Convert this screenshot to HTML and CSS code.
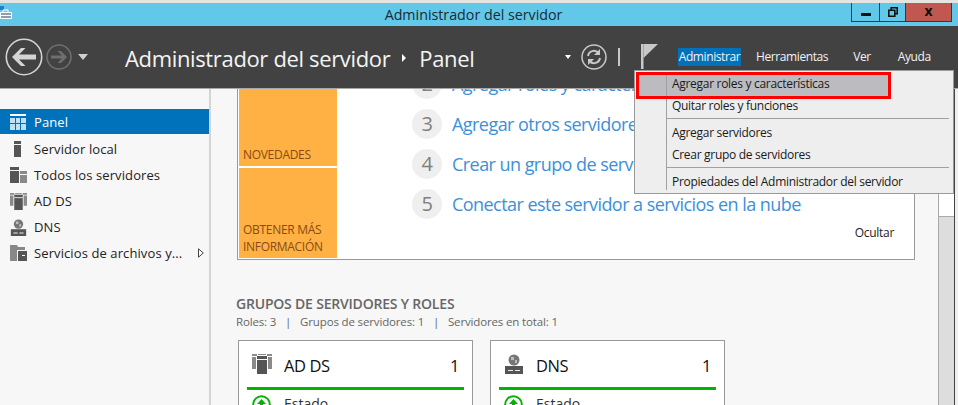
FILE: index.html
```html
<!DOCTYPE html>
<html lang="es">
<head>
  <meta charset="UTF-8" />
  <title>Administrador del servidor</title>
  <link rel="stylesheet" href="styles.css">
</head>
<body>
  <svg class="defs" width="0" height="0">
    <symbol id="ic-adds" viewBox="0 0 20 20">
      <path fill="#8a8a8a" d="M0 0h5v2H0zM15 0h5v2h-5zM0 3h4v12H0zM16 3h4v12h-4z"/>
      <path fill="#8a8a8a" d="M6 0h8v1H6z"/>
      <path fill="#555" d="M5 2h10v18H5z"/>
      <path fill="#f7f7f7" d="M5 5h10v1H5z"/>
    </symbol>
    <symbol id="ic-dns" viewBox="0 0 20 20">
      <circle cx="10" cy="6" r="5.5" fill="#777"/>
      <path fill="#bbb" d="M7 3h3v3H7zM11 6h2v3h-2z"/>
      <path fill="#555" d="M1 12h18v8H1z"/>
      <path fill="#eee" d="M4 16h5v1H4zM11 16h5v1h-5z"/>
    </symbol>
  </svg>

  <div class="topline"></div>

  <header class="titlebar">
    <svg class="app-icon" width="13" height="15" viewBox="0 0 13 15">
      <path fill="#1f7fc8" d="M0 0h4v4H0z"/>
      <path fill="#8aa0b0" stroke="#fff" d="M.5 6.5h11v6H.5z"/>
      <path fill="none" stroke="#fff" d="M3 6V4h5v2M.5 9.5h11"/>
    </svg>
    <span class="title-text">Administrador del servidor</span>
    <div class="winbtns">
      <div class="winbtn"><span class="min-glyph"></span></div>
      <div class="winbtn">
        <svg width="10" height="10" viewBox="0 0 10 10"><path fill="none" stroke="#111" stroke-width="1.6" d="M.8 3.2h6v6h-6zM3.2 3V.8h6v6H7"/></svg>
      </div>
      <div class="winbtn close">x</div>
    </div>
  </header>

  <nav class="navbar">
    <svg class="nav-back" width="38" height="38" viewBox="0 0 38 38">
      <circle cx="19" cy="19" r="17.7" fill="none" stroke="#d4d4d4" stroke-width="1.6"/>
      <path fill="#d4d4d4" d="M7 19l9-9h4.5l-6.5 6.500h17v5H14l6.500 6.500H16z"/>
    </svg>
    <svg class="nav-fwd" width="26" height="26" viewBox="0 0 26 26">
      <circle cx="13" cy="13" r="12" fill="none" stroke="#6f6f6f" stroke-width="1.6"/>
      <path fill="#6f6f6f" d="M21 13l-6-6h-3.500l4.500 4.500H5v3h11l-4.500 4.500H15z"/>
    </svg>
    <span class="nav-caret"></span>
    <div class="crumbs">
      <span>Administrador del servidor</span>
      <span class="crumb-sep"></span>
      <span>Panel</span>
    </div>
    <span class="nav-caret small"></span>
    <svg class="nav-refresh" width="26" height="26" viewBox="0 0 26 26">
      <circle cx="13" cy="13" r="12" fill="none" stroke="#c8c8c8" stroke-width="1.500"/>
      <path fill="none" stroke="#c8c8c8" stroke-width="2" d="M7 12a6 6 0 0 1 10.500-3M19 14a6 6 0 0 1-10.500 3"/>
      <path fill="#c8c8c8" d="M19 5v6h-6zM7 21v-6h6z"/>
    </svg>
    <span class="nav-bar"></span>
    <svg class="nav-flag" width="18" height="26" viewBox="0 0 18 26">
      <path fill="#c8c8c8" d="M1 1h2.500v25H1z"/>
      <path fill="#c8c8c8" d="M3.500 1H18L3.500 15z"/>
    </svg>
    <div class="navmenu">
      <span class="active">Administrar</span>
      <span>Herramientas</span>
      <span class="ver">Ver</span>
      <span>Ayuda</span>
    </div>
  </nav>

  <div class="main">
    <aside class="sidebar">
      <div class="side-row selected">
        <svg class="side-icon" width="17" height="16" viewBox="0 0 17 16">
          <path fill="#fff" d="M0 0h16v2H0z"/>
          <path fill="#bfe0f5" d="M0 4h5v5H0zM6 4h4v5H6zM11 4h5v5h-5zM0 10h5v6H0zM6 10h4v6H6zM11 10h5v6h-5z"/>
        </svg>
        <span>Panel</span>
      </div>
      <div class="side-row">
        <svg class="side-icon" width="17" height="16" viewBox="0 0 17 16">
          <path fill="#555" d="M4 0h7v16H4z"/><path fill="#f7f7f7" d="M4 3h7v1H4z"/>
        </svg>
        <span>Servidor local</span>
      </div>
      <div class="side-row">
        <svg class="side-icon" width="17" height="16" viewBox="0 0 17 16">
          <path fill="#555" d="M0 0h9v16H0z"/><path fill="#888" d="M10 4h7v12h-7z"/>
          <path fill="#f7f7f7" d="M0 3h9v1H0zM10 7h7v1h-7z"/>
        </svg>
        <span>Todos los servidores</span>
      </div>
      <div class="side-row">
        <svg class="side-icon" width="17" height="17"><use href="#ic-adds"/></svg>
        <span>AD DS</span>
      </div>
      <div class="side-row">
        <svg class="side-icon" width="17" height="17"><use href="#ic-dns"/></svg>
        <span>DNS</span>
      </div>
      <div class="side-row">
        <svg class="side-icon" width="17" height="16" viewBox="0 0 17 16">
          <path fill="#888" d="M0 0h7l1 2h7v3H7v11H0z"/><path fill="#555" d="M8 6h9v10H8z"/>
          <path fill="#f7f7f7" d="M12 10h3v1h-3z"/>
        </svg>
        <span class="side-long">Servicios de archivos y...</span>
        <svg width="6" height="10" viewBox="0 0 6 10"><path fill="#fff" stroke="#444" d="M.5.8v8.400L5.300 5z"/></svg>
      </div>
    </aside>

    <section class="content">
      <div class="welcome">
        <div class="tiles">
          <div class="tile news">NOVEDADES</div>
          <div class="tile learn">OBTENER MÁS INFORMACIÓN</div>
        </div>
        <div class="steps">
          <div class="step"><span class="num">2</span><a>Agregar roles y características</a></div>
          <div class="step"><span class="num">3</span><a>Agregar otros servidores para administrar</a></div>
          <div class="step"><span class="num">4</span><a>Crear un grupo de servidores</a></div>
          <div class="step"><span class="num">5</span><a>Conectar este servidor a servicios en la nube</a></div>
          <div class="hide-link">Ocultar</div>
        </div>
      </div>

      <h3 class="groups-title">GRUPOS DE SERVIDORES Y ROLES</h3>
      <p class="groups-sub">Roles: 3 <i>|</i> Grupos de servidores: 1 <i>|</i> Servidores en total: 1</p>

      <div class="cards">
        <div class="card">
          <div class="card-head">
            <svg width="20" height="20"><use href="#ic-adds"/></svg>
            <span class="card-name">AD DS</span>
            <span class="card-count">1</span>
          </div>
          <div class="card-rule"></div>
          <div class="card-row">
            <svg width="19" height="19" viewBox="0 0 19 19"><circle cx="9.500" cy="9.500" r="8.300" fill="none" stroke="#00b400" stroke-width="2"/><path fill="#00b400" d="M9.500 4l4.500 5h-3v5H8V9H5z"/></svg>
            <span>Estado</span>
          </div>
        </div>
        <div class="card">
          <div class="card-head">
            <svg width="20" height="20"><use href="#ic-dns"/></svg>
            <span class="card-name">DNS</span>
            <span class="card-count">1</span>
          </div>
          <div class="card-rule"></div>
          <div class="card-row">
            <svg width="19" height="19" viewBox="0 0 19 19"><circle cx="9.500" cy="9.500" r="8.300" fill="none" stroke="#00b400" stroke-width="2"/><path fill="#00b400" d="M9.500 4l4.500 5h-3v5H8V9H5z"/></svg>
            <span>Estado</span>
          </div>
        </div>
      </div>
    </section>

    <div class="scrollbar"><div class="thumb"></div></div>
    <div class="frame-edge"></div>
  </div>

  <div class="dropdown">
    <div class="dd-item hi">Agregar roles y características</div>
    <div class="dd-item">Quitar roles y funciones</div>
    <div class="dd-sep"></div>
    <div class="dd-item">Agregar servidores</div>
    <div class="dd-item">Crear grupo de servidores</div>
    <div class="dd-sep"></div>
    <div class="dd-item">Propiedades del Administrador del servidor</div>
    <div class="dd-redbox"></div>
  </div>
</body>
</html>
```

FILE: styles.css
```css
* {
  box-sizing: border-box;
}

html, body {
  height: 100%;
}

html {
  overflow: hidden;
}

body {
  margin: 0;
  width: 958px;
  height: 405px;
  overflow: hidden;
  position: relative;
  display: flex;
  flex-direction: column;
  background: #efefef;
  font-family: "Open Sans", "Noto Sans", sans-serif;
  font-size: 12px;
  color: #1a1a1a;
}

.defs {
  position: absolute;
}

.topline {
  height: 3px;
  background: #e4e4e0;
  flex: none;
}

/* title bar */
.titlebar {
  height: 23px;
  flex: none;
  background: #62c8ea;
  display: flex;
  align-items: center;
  justify-content: center;
  position: relative;
  padding-right: 11px;
  color: #1a2a33;
  font-size: 14.25px;
}

.app-icon {
  position: absolute;
  left: 0;
  top: 3px;
}

.winbtns {
  position: absolute;
  left: 851px;
  top: 0;
  width: 101px;
  height: 19px;
  display: flex;
  border: 1px solid #2a3c46;
  border-top: none;
}

.winbtn {
  width: 28px;
  display: flex;
  align-items: center;
  justify-content: center;
  border-right: 1px solid #2a3c46;
}

.winbtn + .winbtn {
  width: 26px;
}

.winbtn.close {
  flex: 1;
  border-right: none;
  background: #c0584f;
  color: #111;
  font-weight: 700;
  font-size: 14px;
  line-height: 14px;
  padding-bottom: 3px;
}

.min-glyph {
  width: 10px;
  height: 3px;
  background: #111;
  margin-top: 4px;
}

/* nav bar */
.navbar {
  height: 63px;
  flex: none;
  background: #424242;
  border-bottom: 1px solid #a8a8a8;
  display: flex;
  align-items: center;
  padding-left: 5px;
  color: #fff;
}

.nav-fwd {
  margin-left: 3px;
}

.nav-caret {
  width: 0;
  height: 0;
  margin-left: 6px;
  border-left: 5px solid transparent;
  border-right: 5px solid transparent;
  border-top: 6px solid #d0d0d0;
}

.nav-caret.small {
  margin-left: 0;
  border-left-width: 3.500px;
  border-right-width: 3.500px;
  border-top-width: 4px;
  border-top-color: #fff;
}

.crumbs {
  margin-left: 37px;
  width: 440px;
  display: flex;
  align-items: center;
  font-size: 22px;
  letter-spacing: -0.35px;
  color: #f4f4f4;
  padding-top: 2px;
}

.crumb-sep {
  width: 0;
  height: 0;
  margin: 0 13px 0 12px;
  border-top: 4px solid transparent;
  border-bottom: 4px solid transparent;
  border-left: 4px solid #fff;
}

.nav-refresh {
  margin-left: 10px;
}

.nav-bar {
  width: 2px;
  height: 18px;
  margin-left: 11px;
  background: #c8c8c8;
}

.nav-flag {
  margin-left: 20px;
  margin-top: -2px;
}

.navmenu {
  display: flex;
  align-items: center;
  margin-left: 20px;
  font-size: 12px;
  letter-spacing: -0.4px;
}

.navmenu span {
  margin-right: 25px;
  line-height: 18px;
  color: #f2f2f2;
}

.navmenu .active {
  background: #0072bc;
  margin-right: 15px;
  width: 63px;
  text-align: center;
}

.navmenu .ver {
  margin-right: 27px;
}

/* sidebar + content */
.main {
  flex: 1;
  display: flex;
  min-height: 0;
  overflow: hidden;
}

.sidebar {
  width: 211px;
  flex: none;
  padding-top: 20px;
  background: #f7f7f7;
  border-right: 2px solid #d4d4d4;
  font-size: 13px;
  letter-spacing: 0.1px;
  color: #222;
}

.side-row {
  height: 26px;
  display: flex;
  align-items: center;
  padding-left: 10px;
}

.side-row.selected {
  height: 25px;
  margin-bottom: 2px;
  background: #0072bc;
  color: #fff;
}

.side-icon {
  flex: none;
  margin-right: 7px;
}

.side-long {
  width: 164px;
  white-space: nowrap;
}

.content {
  width: 727px;
  flex: none;
  padding-left: 26px;
  overflow: hidden;
  background: #f7f7f7;
}

.welcome {
  width: 678px;
  height: 171px;
  background: #fff;
  border: 1px solid #999;
  border-top: none;
  display: flex;
  overflow: hidden;
  padding-left: 1px;
}

.tiles {
  width: 98px;
  flex: none;
  display: flex;
  flex-direction: column;
  gap: 2px;
  padding-bottom: 1px;
}

.tile {
  background: #ffb143;
  color: #8a4a14;
  font-size: 12px;
  letter-spacing: -0.3px;
  line-height: 17px;
  display: flex;
  align-items: flex-end;
  padding: 0 4px 3px;
}

.tile.news {
  height: 77px;
}

.tile.learn {
  flex: 1;
}

.steps {
  flex: 1;
  margin-top: -25px;
  padding-left: 75px;
}

.step {
  height: 40px;
  display: flex;
  align-items: center;
  gap: 10px;
  font-size: 18px;
  letter-spacing: -0.55px;
  color: #3c90da;
}

.num {
  width: 30px;
  height: 30px;
  flex: none;
  border-radius: 50%;
  background: #efefef;
  color: #808080;
  font-size: 20px;
  text-align: center;
  line-height: 30px;
}

.hide-link {
  padding: 1px 20px 0 0;
  text-align: right;
  line-height: 16px;
  font-size: 12px;
  letter-spacing: -0.3px;
  color: #222;
}

.groups-title {
  margin: 36px 0 0 -1px;
  font-size: 14px;
  font-weight: 600;
  letter-spacing: -0.2px;
  line-height: 15px;
  color: #666;
}

.groups-sub {
  margin: 4px 0 0 -1px;
  font-size: 11.500px;
  letter-spacing: -0.15px;
  line-height: 14px;
  color: #666;
}

.groups-sub i {
  font-style: normal;
  margin: 0 6px;
}

.cards {
  display: flex;
  gap: 17px;
  margin-top: 11px;
  padding-left: 1px;
}

.card {
  width: 235px;
  height: 100px;
  flex: none;
  background: #fff;
  border: 1px solid #999;
  padding: 0 8px;
}

.card-head {
  height: 46px;
  display: flex;
  align-items: center;
  padding-left: 5px;
  font-size: 16.500px;
  letter-spacing: -0.4px;
  color: #111;
}

.card-name {
  flex: 1;
  margin-left: 12px;
  padding-top: 3px;
}

.card-count {
  margin-right: 5px;
  padding-top: 3px;
}

.card-rule {
  height: 3px;
  background: #00b400;
}

.card-row {
  display: flex;
  align-items: flex-start;
  gap: 13px;
  padding: 5px 0 0 5px;
  font-size: 14px;
  color: #333;
}

.card-row span {
  margin-top: -1px;
}

.scrollbar {
  width: 16px;
  flex: none;
  background: #ddd;
  border-left: 1px solid #aaa;
}

.thumb {
  height: 128px;
  background: #fff;
  border-bottom: 1px solid #aaa;
}

.frame-edge {
  width: 1px;
  flex: none;
  background: #444;
}

/* dropdown */
.dropdown {
  position: absolute;
  left: 634px;
  top: 70px;
  width: 320px;
  height: 124px;
  background: #eee;
  border: 1px solid #9a9a9a;
  padding: 2px 2px 0;
  font-size: 12px;
  letter-spacing: -0.3px;
  color: #1a1a1a;
}

.dropdown::before {
  content: "";
  position: absolute;
  left: 31px;
  top: 1px;
  height: 118px;
  border-left: 1px solid #a0a0a0;
}

.dd-item {
  height: 22px;
  line-height: 22px;
  padding-left: 35px;
}

.dd-item.hi {
  width: 254px;
  height: 23px;
  margin-bottom: -1px;
  background: #bcbcc0;
}

.dd-sep {
  height: 1px;
  margin: 1px 2px 3px 30px;
  background: #a0a0a0;
}

.dd-redbox {
  position: absolute;
  left: 1px;
  top: 1px;
  width: 255px;
  height: 27px;
  border: 3px solid #f00;
}
```
